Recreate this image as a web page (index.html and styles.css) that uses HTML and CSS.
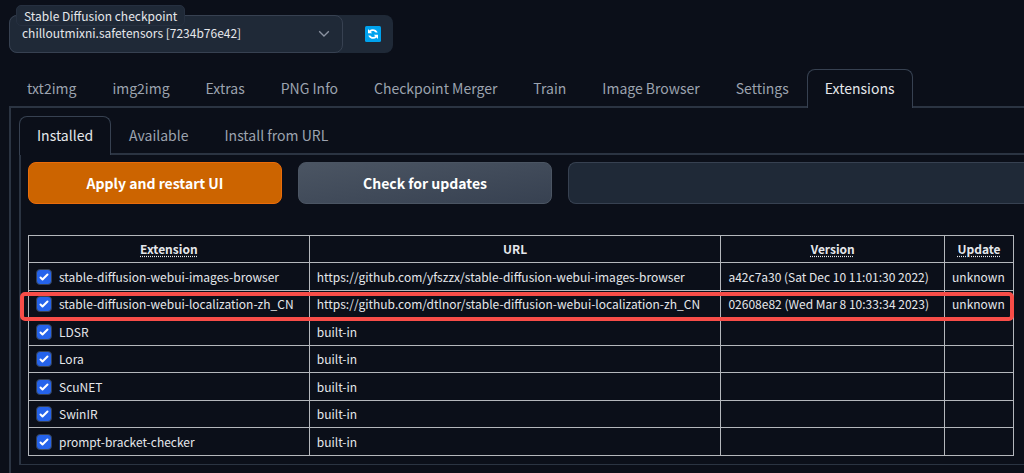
FILE: index.html
```html
<!DOCTYPE html>
<html lang="en">
<head>
<meta charset="utf-8">
<title>Stable Diffusion</title>
<link rel="stylesheet" href="styles.css">
</head>
<body>
<main class="app">
  <div class="quicksettings">
    <div class="checkpoint">
      <label class="checkpoint-label" for="checkpoint">Stable Diffusion checkpoint</label>
      <select class="checkpoint-select" id="checkpoint"><option>chilloutmixni.safetensors [7234b76e42]</option></select>
      <svg class="chevron" viewBox="0 0 12 8" aria-hidden="true"><path d="M1.2 1.2 6 6l4.800-4.800" fill="none" stroke="currentColor" stroke-width="1.300"/></svg>
    </div>
    <button class="refresh" type="button" aria-label="Refresh checkpoints">
      <svg viewBox="0 0 16 16" aria-hidden="true"><rect width="16" height="16" rx="1.500" fill="#00a2ed"/><path d="M3 3v4.200h4.200L5.700 5.700c1.500-1.200 3.800-1 5 .9h2C11.500 3.200 7 2.200 4.400 4.400zM13 13V8.800H8.800l1.500 1.500c-1.500 1.200-3.800 1-5-.9h-2c1.200 3.400 5.700 4.400 8.300 2.200z" fill="#fff"/></svg>
    </button>
  </div>

  <nav class="tabs">
    <button class="tab" type="button">txt2img</button>
    <button class="tab" type="button">img2img</button>
    <button class="tab" type="button">Extras</button>
    <button class="tab" type="button">PNG Info</button>
    <button class="tab" type="button">Checkpoint Merger</button>
    <button class="tab" type="button">Train</button>
    <button class="tab" type="button">Image Browser</button>
    <button class="tab" type="button">Settings</button>
    <button class="tab selected" type="button">Extensions</button>
  </nav>
  <section class="panel outer">
    <nav class="tabs">
      <button class="tab selected" type="button">Installed</button>
      <button class="tab" type="button">Available</button>
      <button class="tab" type="button">Install from URL</button>
    </nav>
    <section class="panel inner">
      <div class="actions">
        <button class="btn primary" type="button">Apply and restart UI</button>
        <button class="btn secondary" type="button">Check for updates</button>
        <input class="status" type="text" aria-label="Status">
      </div>
      <div class="table-wrap">
        <table class="extensions">
          <colgroup><col class="col-name"><col class="col-url"><col class="col-version"><col class="col-update"></colgroup>
          <thead>
            <tr><th><abbr title="Extension">Extension</abbr></th><th>URL</th><th><abbr title="Version">Version</abbr></th><th><abbr title="Update">Update</abbr></th></tr>
          </thead>
          <tbody>
            <tr><td><label><input type="checkbox" checked>stable-diffusion-webui-images-browser</label></td><td><a href="https://github.com/yfszzx/stable-diffusion-webui-images-browser">https://github.com/yfszzx/stable-diffusion-webui-images-browser</a></td><td>a42c7a30 (Sat Dec 10 11:01:30 2022)</td><td>unknown</td></tr>
            <tr><td><label><input type="checkbox" checked>stable-diffusion-webui-localization-zh_CN</label></td><td><a href="https://github.com/dtlnor/stable-diffusion-webui-localization-zh_CN">https://github.com/dtlnor/stable-diffusion-webui-localization-zh_CN</a></td><td>02608e82 (Wed Mar 8 10:33:34 2023)</td><td>unknown</td></tr>
            <tr><td><label><input type="checkbox" checked>LDSR</label></td><td>built-in</td><td></td><td></td></tr>
            <tr><td><label><input type="checkbox" checked>Lora</label></td><td>built-in</td><td></td><td></td></tr>
            <tr><td><label><input type="checkbox" checked>ScuNET</label></td><td>built-in</td><td></td><td></td></tr>
            <tr><td><label><input type="checkbox" checked>SwinIR</label></td><td>built-in</td><td></td><td></td></tr>
            <tr><td><label><input type="checkbox" checked>prompt-bracket-checker</label></td><td>built-in</td><td></td><td></td></tr>
          </tbody>
        </table>
        <div class="highlight"></div>
      </div>
    </section>
  </section>
</main>
</body>
</html>
```
FILE: styles.css
```css
* { box-sizing: border-box; }
body {
  margin: 0;
  background: #0b0f19;
  color: #e5e7eb;
  font-family: "Noto Sans CJK SC", "Noto Sans", sans-serif;
  font-size: 12px;
  overflow-x: hidden;
}
button, input, select { font: inherit; color: inherit; margin: 0; }
.app { padding: 15px 0 8px 9px; }

.quicksettings {
  display: flex;
  width: 384px;
  height: 38px;
  background: #1f2937;
  border-radius: 8px;
}
.checkpoint { position: relative; flex: 1; }
.checkpoint-select {
  appearance: none;
  width: 100%;
  height: 100%;
  padding: 0 32px 3px 12px;
  background: #1f2937;
  border: 1px solid #374151;
  border-radius: 8px;
}
.checkpoint-label {
  position: absolute;
  left: 7px;
  top: -10px;
  padding: 0 7px;
  line-height: 19px;
  background: #1f2937;
  border: 1px solid #263040;
  border-radius: 5px;
  white-space: nowrap;
}
.chevron {
  position: absolute;
  right: 13px;
  top: 15px;
  width: 12px;
  height: 8px;
  color: #8b93a1;
}
.refresh {
  display: grid;
  place-items: center;
  width: 50px;
  padding: 0 0 0 10px;
  background: none;
  border: 0;
}
.refresh svg { width: 16px; height: 16px; }

.tabs { display: flex; }
.quicksettings + .tabs { margin-top: 16px; }
.tab {
  height: 37px;
  padding: 0 17px;
  background: none;
  border: 1px solid transparent;
  border-bottom: 0;
  font-size: 14px;
  line-height: 22px;
  color: #9ca3af;
  white-space: nowrap;
}
.tab.selected {
  height: 39px;
  margin-bottom: -2px;
  padding-bottom: 2px;
  position: relative;
  background: #0b0f19;
  border-color: #374151;
  border-radius: 8px 8px 0 0;
  color: #e5e7eb;
}
.panel { border: 2px solid #2b3442; border-right: 0; }
.outer { padding: 8px 0 16px 8px; border-bottom: 0; }
.inner { padding: 7px 0 8px 7px; border-bottom-width: 1px; }

.actions { display: flex; gap: 16px; }
.btn, .status { height: 42px; border-radius: 8px; }
.btn {
  flex: 0 0 254px;
  padding: 0 0 1px;
  color: #fff;
  font-size: 14px;
  font-weight: 700;
}
.primary { background: #cc6400; border: 1px solid #ea6c0a; }
.secondary { background: linear-gradient(to bottom right, #4b5563, #374151); border: 1px solid #4b5563; }
.status {
  flex: 1;
  min-width: 0;
  padding: 0 12px;
  background: #1f2937;
  border: 1px solid #374151;
  border-right: 0;
  border-radius: 8px 0 0 8px;
}

.table-wrap { position: relative; margin: 31px 10px 0 0; }
.extensions {
  width: 100%;
  table-layout: fixed;
  border-collapse: collapse;
}
.col-name { width: 28.5%; }
.col-url { width: 41.8%; }
.col-version { width: 22.7%; }
.col-update { width: 7%; }
.extensions th, .extensions td {
  height: 28px;
  padding: 0 7px;
  border: 1px solid #b4b7bc;
  line-height: 20px;
  text-align: left;
  white-space: nowrap;
}
.extensions th { height: 27px; text-align: center; font-weight: 700; }
.extensions tbody tr:nth-child(4n) td { height: 27px; }
.extensions tbody tr:nth-child(4n + 2) td { height: 27px; }
.extensions abbr { text-decoration: underline dotted; text-underline-offset: 2px; }
.extensions a { color: inherit; text-decoration: none; }
.extensions label { display: flex; align-items: center; gap: 7px; }
.extensions input {
  appearance: none;
  flex: none;
  width: 16px;
  height: 16px;
  border: 1px solid #374151;
  border-radius: 4px;
  background: #2563eb url("data:image/svg+xml,%3Csvg viewBox='0 0 16 16' xmlns='http://www.w3.org/2000/svg'%3E%3Cpath fill='white' d='M12.207 4.793a1 1 0 010 1.414l-5 5a1 1 0 01-1.414 0l-2-2a1 1 0 011.414-1.414L6.500 9.086l4.293-4.293a1 1 0 011.414 0z'/%3E%3C/svg%3E") center / 16px;
}
.highlight {
  position: absolute;
  left: -8px;
  right: 0;
  top: 57px;
  height: 29px;
  border: 4px solid #f84d48;
  border-radius: 5px;
  pointer-events: none;
}
```
